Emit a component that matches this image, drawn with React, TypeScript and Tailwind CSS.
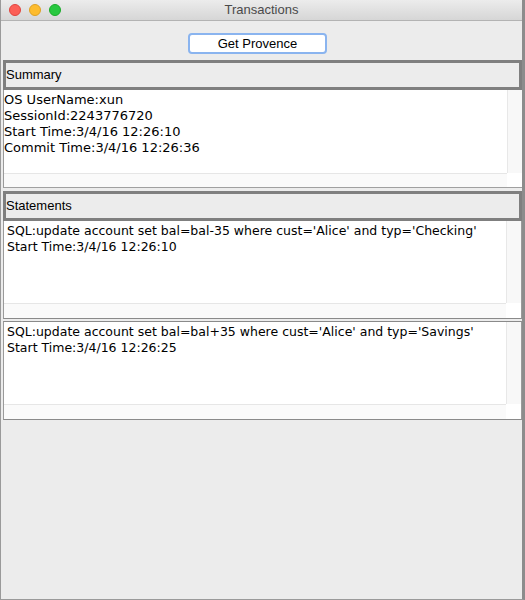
export default function App() {
  const statements = [
    { sql: "SQL:update account set bal=bal-35 where cust='Alice' and typ='Checking'", start: 'Start Time:3/4/16 12:26:10' },
    { sql: "SQL:update account set bal=bal+35 where cust='Alice' and typ='Savings'", start: 'Start Time:3/4/16 12:26:25' },
  ]

  return (
    <div className="w-[525px] h-[600px] bg-[#ececec] flex flex-col overflow-hidden border-l border-[#9a9a9a] border-r-[3px] border-r-[#8c8c8c] border-b border-b-[#9a9a9a] font-['DejaVu_Sans',sans-serif] text-[12.5px] text-black">
      {/* Title bar */}
      <div className="relative h-[21px] shrink-0 flex items-center justify-center bg-gradient-to-b from-[#ececec] to-[#d6d6d6] border-b border-[#b3b3b3]">
        <div className="absolute left-[8px] top-[4px] flex gap-[8px]">
          <span className="w-[12px] h-[12px] rounded-full bg-[#fc5f57] border border-[#e0443e]" />
          <span className="w-[12px] h-[12px] rounded-full bg-[#fdbc2e] border border-[#dea123]" />
          <span className="w-[12px] h-[12px] rounded-full bg-[#28c840] border border-[#1aab29]" />
        </div>
        <span className="text-[13px] text-[#4a4a4a] font-['Liberation_Sans',sans-serif]">Transactions</span>
      </div>

      <div className="flex flex-col pl-[2px]">
        {/* Button */}
        <div className="flex justify-center pt-[12px] pb-[6px] pr-[10px]">
          <button className="w-[139px] h-[21px] bg-white rounded-[4px] border-2 border-[#8ab4ef] text-[13px] leading-none font-['Liberation_Sans',sans-serif]">
            Get Provence
          </button>
        </div>

        {/* Summary */}
        <div className="h-[30px] border-[3px] border-[#7f7f7f] bg-[#ececec] flex items-center text-[13px] font-['Liberation_Sans',sans-serif]">
          Summary
        </div>
        <div className="flex flex-col border-l border-[#9a9a9a] border-b border-b-[#a0a0a0]">
          <div className="flex h-[83px]">
            <div className="flex-1 bg-white pt-[2px] leading-[16px] text-[13px]">
              <div>OS UserName:xun</div>
              <div>SessionId:2243776720</div>
              <div>Start Time:3/4/16 12:26:10</div>
              <div>Commit Time:3/4/16 12:26:36</div>
            </div>
            <div className="w-[15px] bg-[#f8f8f8] border-l border-[#e8e8e8]" />
          </div>
          <div className="flex h-[14px]">
            <div className="flex-1 bg-[#fafafa] border-t border-[#e6e6e6]" />
            <div className="w-[15px] bg-white" />
          </div>
        </div>

        {/* Statements */}
        <div className="mt-[3px] h-[30px] border-[3px] border-[#7f7f7f] bg-[#ececec] flex items-center text-[13px] font-['Liberation_Sans',sans-serif]">
          Statements
        </div>
        {statements.map((s, i) => (
          <div key={i} className={`flex flex-col border-x border-[#9a9a9a] border-b border-b-[#8a8a8a] ${i > 0 ? 'border-t border-t-[#8a8a8a] mt-[2px]' : ''}`}>
            <div className="flex h-[82px]">
              <div className="flex-1 bg-white pl-[3px] pt-[2px] leading-[16px]">
                <div>{s.sql}</div>
                <div>{s.start}</div>
              </div>
              <div className="w-[15px] bg-[#f8f8f8] border-l border-[#e8e8e8]" />
            </div>
            <div className="flex h-[15px]">
              <div className="flex-1 bg-[#fafafa] border-t border-[#e6e6e6]" />
              <div className="w-[15px] bg-white" />
            </div>
          </div>
        ))}
      </div>
    </div>
  )
}
